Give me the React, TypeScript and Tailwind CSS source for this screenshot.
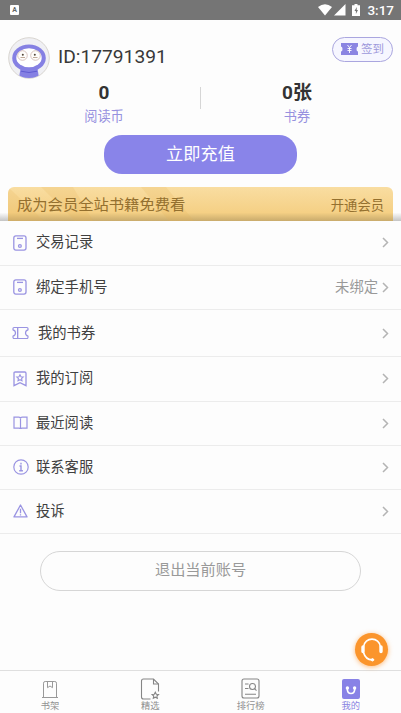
import React from "react";

interface MenuRow {
  label: string;
  icon: React.ReactNode;
  height: string;
  value?: string;
  wide?: boolean;
}

interface NavTab {
  label: string;
  icon: React.ReactNode;
  active?: boolean;
}

// Icons
const PhoneIcon = () => (
  <svg width="14" height="16" viewBox="0 0 14 16" fill="none" stroke="#9a94e2" strokeWidth="1.3">
    <rect x="0.8" y="0.9" width="12.2" height="14.2" rx="2" />
    <path d="M4 3.4h6" />
    <circle cx="6.9" cy="11" r="1.4" />
  </svg>
);

const TicketIcon = () => (
  <svg className="shrink-0" width="17" height="14" viewBox="0 0 17 14" fill="none" stroke="#9a94e2" strokeWidth="1.2" strokeLinejoin="round">
    <path d="M5.600 1.500H2.200Q.8 1.500 1 3.900q2.500.7 2.500 3.100T1 10.100q-.2 2.400 1.200 2.400h3.400z" />
    <path d="M5.600 1.500h9.200q1.400 0 1.200 2.400-2.500.7-2.500 3.100t2.500 3.100q.2 2.400-1.200 2.400H5.600z" />
  </svg>
);

const BookmarkIcon = () => (
  <svg width="14" height="16" viewBox="0 0 14 16" fill="none" stroke="#9a94e2" strokeWidth="1.3">
    <path d="M1 14.700V2.200Q1 1 2.200 1h9.600Q13 1 13 2.200v12.500l-6-3z" />
    <path d="M7 3.700l1 2 2.200.3-1.600 1.500.4 2.200-2-1-2 1 .4-2.200-1.600-1.500 2.200-.3z" strokeWidth="1.1" />
  </svg>
);

const BookIcon = () => (
  <svg width="15" height="14" viewBox="0 0 15 14" fill="none" stroke="#9a94e2" strokeWidth="1.2">
    <path d="M1 1.200h4.800q1.700 0 1.700 1.300 0-1.300 1.700-1.300H14v11H9.200q-1.700 0-1.700.8 0-.8-1.700-.8H1z" />
    <path d="M7.500 2.500V13" />
  </svg>
);

const InfoIcon = () => (
  <svg className="shrink-0" width="16" height="16" viewBox="0 0 16 16" fill="none" stroke="#9a94e2" strokeWidth="1.2">
    <circle cx="8" cy="8" r="7.2" />
    <path d="M8 3.700v1.900M6.500 7H8v4.500M6.200 11.700h3.700" strokeWidth="1.4" />
  </svg>
);

const WarnIcon = () => (
  <svg width="15" height="14" viewBox="0 0 15 14" fill="none" stroke="#9a94e2" strokeWidth="1.3" strokeLinejoin="round">
    <path d="M7.500 1L14 12.900H1z" />
    <path d="M7.500 4.800v4.500M7.500 10.200v1.200" />
  </svg>
);

const Chevron = () => (
  <svg width="7" height="11" viewBox="0 0 7 11" fill="none" stroke="#b4b4b4" strokeWidth="1.5">
    <path d="M1 1l4.500 4.500L1 10" />
  </svg>
);

const ShelfIcon = () => (
  <svg width="18" height="20" viewBox="0 0 18 20" fill="none" stroke="#999" strokeWidth="1">
    <path d="M1 18.500h16M2.500 18.500V4.200Q2.500 2.500 4.200 2.500h9.600q1.700 0 1.700 1.700v14.300" />
    <path d="M6.500 2.500v6.200L9 7l2.500 1.700V2.500" />
  </svg>
);

const PickIcon = () => (
  <svg width="20" height="22" viewBox="0 0 20 22" fill="none" stroke="#858585" strokeWidth="1.1">
    <path d="M10.500 21H3.500Q1.500 21 1.500 19V3q0-2 2-2h10l5 5v7.500" />
    <path d="M13.500 1v5h5" />
    <path d="M15.300 14.200l1 2 2.200.3-1.600 1.500.4 2.200-2-1-2 1 .4-2.200-1.600-1.500 2.200-.3z" />
  </svg>
);

const RankIcon = () => (
  <svg width="19" height="21" viewBox="0 0 19 21" fill="none" stroke="#858585" strokeWidth="1.1">
    <rect x="1" y="1" width="17" height="19" rx="2" />
    <path d="M4 6h3.500M4 10.500h3.500M4 16.200h11" />
    <circle cx="11.500" cy="8.500" r="3" />
    <path d="M13.500 10.700l2 2" />
  </svg>
);

const MineIcon = () => (
  <svg width="18" height="20" viewBox="0 0 18 20">
    <rect width="18" height="20" rx="2" fill="#8882e6" />
    <circle cx="5.400" cy="9" r="1.700" fill="white" />
    <circle cx="12.600" cy="9" r="1.700" fill="white" />
    <path d="M5.300 10c0 6 7.400 6 7.400 0" fill="none" stroke="white" strokeWidth="1.6" />
  </svg>
);

const Avatar = () => (
  <svg width="42" height="42" viewBox="0 0 42 42">
    <defs>
      <clipPath id="face">
        <circle cx="21" cy="21" r="20" />
      </clipPath>
    </defs>
    <circle cx="21" cy="21" r="20.300" fill="#f0f0f4" stroke="#d8d5d0" />
    <g clipPath="url(#face)">
      <path d="M12.500 32h17l2 11h-21z" fill="#8580e3" />
      <ellipse cx="21" cy="21" rx="16.800" ry="13.600" fill="#8580e3" />
      <path d="M13 34.200q8 2.600 16 0" fill="none" stroke="#605bd0" strokeWidth="1" />
      <ellipse cx="21" cy="20.700" rx="12.700" ry="9.500" fill="white" />
    </g>
    <circle cx="14.500" cy="18.500" r="4.800" fill="#fffdfb" stroke="#ceb5ae" strokeWidth=".8" />
    <circle cx="27.500" cy="18.500" r="4.800" fill="#fffdfb" stroke="#ceb5ae" strokeWidth=".8" />
    <circle cx="14.800" cy="17.800" r="1" fill="#534738" />
    <circle cx="26.800" cy="17.800" r="1" fill="#534738" />
    <path d="M12.500 20.500h4.500M25 20.500h4.500" stroke="#b9a18e" strokeWidth=".9" />
  </svg>
);

const rows: MenuRow[] = [
  { label: "交易记录", icon: <PhoneIcon />, height: "h-[45px] pb-px" },
  { label: "绑定手机号", icon: <PhoneIcon />, height: "h-11 pb-px", value: "未绑定" },
  { label: "我的书券", icon: <TicketIcon />, height: "h-[47px]", wide: true },
  { label: "我的订阅", icon: <BookmarkIcon />, height: "h-[45px] pb-px" },
  { label: "最近阅读", icon: <BookIcon />, height: "h-11 pb-px" },
  { label: "联系客服", icon: <InfoIcon />, height: "h-11 pb-px" },
  { label: "投诉", icon: <WarnIcon />, height: "h-11 pb-px" },
];

const tabs: NavTab[] = [
  { label: "书架", icon: <ShelfIcon /> },
  { label: "精选", icon: <PickIcon /> },
  { label: "排行榜", icon: <RankIcon /> },
  { label: "我的", icon: <MineIcon />, active: true },
];

function StatusBar() {
  return (
    <div className="flex h-5 shrink-0 items-center justify-between bg-[#757575] pl-2.5 pr-[7px] text-white">
      <div className="flex h-2.5 w-[9px] items-center justify-center rounded-[1px] bg-white text-[7px] font-bold leading-none text-[#666]">
        A
      </div>
      <div className="flex items-center">
        <svg width="44" height="14" viewBox="0 0 44 14" fill="white">
          <path d="M0 4Q7 -1.500 14 4L7 12.500z" />
          <path d="M27.500 1v11.500H16z" />
          <path d="M36.500 1h3v1.300h2.500V13h-8V2.300h2.500z" />
          <path d="M38.700 4l-2.200 4h1.400v3l2.100-4h-1.300z" fill="#757575" />
        </svg>
        <span className="ml-[5px] text-[13.5px] font-medium leading-5">3:17</span>
      </div>
    </div>
  );
}

function App() {
  return (
    <div className="relative flex h-[713px] w-[401px] flex-col overflow-hidden bg-[#fdfdfd] font-[Roboto,'Noto_Sans_CJK_SC',sans-serif]">
      <StatusBar />

      {/* Profile */}
      <div className="flex h-[59px] shrink-0 items-start px-2 pt-[17px]">
        <Avatar />
        <h1 className="ml-2 mt-1.5 text-[19.2px] leading-7 text-[#383838]">ID:17791391</h1>
        <button className="ml-auto flex h-[25px] w-[61px] items-center justify-center gap-[3px] rounded-full border border-[#aaa6df] bg-[#f6f6ff] text-[11.5px] text-[#9d98db]">
          <svg className="-mt-px" width="17" height="12" viewBox="0 0 17 12">
            <path d="M0 0h17v3.500q-1.500 0-1.500 2.500t1.500 2.500V12H0V8.500Q1.500 8.500 1.500 6T0 3.500z" fill="#8a84e2" />
            <path d="M6.500 2l2 2.600 2-2.600M8.500 4.600v5.400M6.500 5.500h4M6.500 7.500h4" fill="none" stroke="white" strokeWidth=".9" />
          </svg>
          <span className="pt-px">签到</span>
        </button>
      </div>

      {/* Balance */}
      <div className="flex h-14 shrink-0 items-start">
        <div className="flex w-[208px] flex-col items-center text-center">
          <p className="text-[19px] font-bold leading-[27px] text-[#333]">0</p>
          <p className="mt-px text-[13.2px] leading-5 text-[#9791df]">阅读币</p>
        </div>
        <div className="-ml-2 mt-2 h-[22px] w-px shrink-0 bg-[#d6d6d6]" />
        <div className="ml-px flex w-[190px] flex-col items-center text-center">
          <p className="text-[19px] font-bold leading-[27px] text-[#333]">0张</p>
          <p className="mt-px text-[13.2px] leading-5 text-[#9791df]">书券</p>
        </div>
      </div>

      <button className="mx-auto flex h-[39px] w-[193px] shrink-0 items-center justify-center rounded-[18px] bg-[#8984e9] pt-px text-[17.2px] text-white">
        立即充值
      </button>

      {/* Member banner */}
      <div className="mt-[13px] shrink-0 bg-linear-to-b from-transparent from-75% to-[#c4c4c4] px-2">
        <div className="relative flex h-[34px] items-center justify-between overflow-hidden rounded-t-[6px] bg-linear-to-b from-[#f9dda1] via-[#f5d085] via-75% to-[#c9ab6c] px-[9px] pt-[3px] text-[#94702f]">
          <svg className="absolute left-0 top-0" width="190" height="34" viewBox="0 0 190 34" fill="#e8b55c" fillOpacity=".2">
            <path d="M0 0l36 34H0z" />
            <path d="M33 0h32l20 34H67z" />
            <path d="M133 0h25l28 34h-25z" />
          </svg>
          <span className="relative text-[15.3px]">成为会员全站书籍免费看</span>
          <span className="relative pt-px text-[13.3px]">开通会员</span>
        </div>
      </div>

      {/* Menu */}
      <ul className="shrink-0">
        {rows.map((row) => (
          <li key={row.label} className={`flex items-center border-b border-[#ececec] pl-3 pr-3 ${row.height}`}>
            <span className={`flex w-4 items-center justify-start ${row.wide ? "" : "pl-px"}`}>{row.icon}</span>
            <span className={`pt-px text-[14.3px] text-[#404040] ${row.wide ? "ml-2.5" : "ml-2"}`}>{row.label}</span>
            <span className="ml-auto mr-1 pt-px text-[14.3px] text-[#999]">{row.value}</span>
            <Chevron />
          </li>
        ))}
      </ul>

      <button className="mx-10 mt-[17px] flex h-10 shrink-0 items-center justify-center rounded-full border border-[#d6d6d6] pb-px text-[15.2px] text-[#999]">
        退出当前账号
      </button>

      {/* Floating customer service button */}
      <div className="absolute left-[355px] top-[633px] h-[33px] w-[33px] rounded-full bg-[#fb952c] shadow-[0_1px_5px_rgba(255,150,50,0.65)]">
        <svg width="33" height="33" viewBox="0 0 33 33" fill="none" stroke="white" strokeLinecap="round">
          <path d="M8.500 14C9.500 3.500 24.500 3.500 25.500 14" strokeWidth="1.7" />
          <path d="M8 14v4.500M26 14v4.500" strokeWidth="3.4" />
          <path d="M8.500 19.500c1.500 5 4.500 7.300 8.500 7.300" strokeWidth="1.7" />
          <circle cx="17.500" cy="26.800" r="1.200" fill="white" />
        </svg>
      </div>

      {/* Bottom navigation */}
      <nav className="mt-auto flex h-[43px] shrink-0 border-t border-[#dfdfdf]">
        {tabs.map((tab) => (
          <div key={tab.label} className="flex flex-1 flex-col items-center pt-[7px]">
            <div className="flex h-[21px] items-center">{tab.icon}</div>
            <span className={`text-[9.3px] leading-[13px] ${tab.active ? "text-[#8b85e2]" : "text-[#929292]"}`}>
              {tab.label}
            </span>
          </div>
        ))}
      </nav>
    </div>
  );
}

export default App;
